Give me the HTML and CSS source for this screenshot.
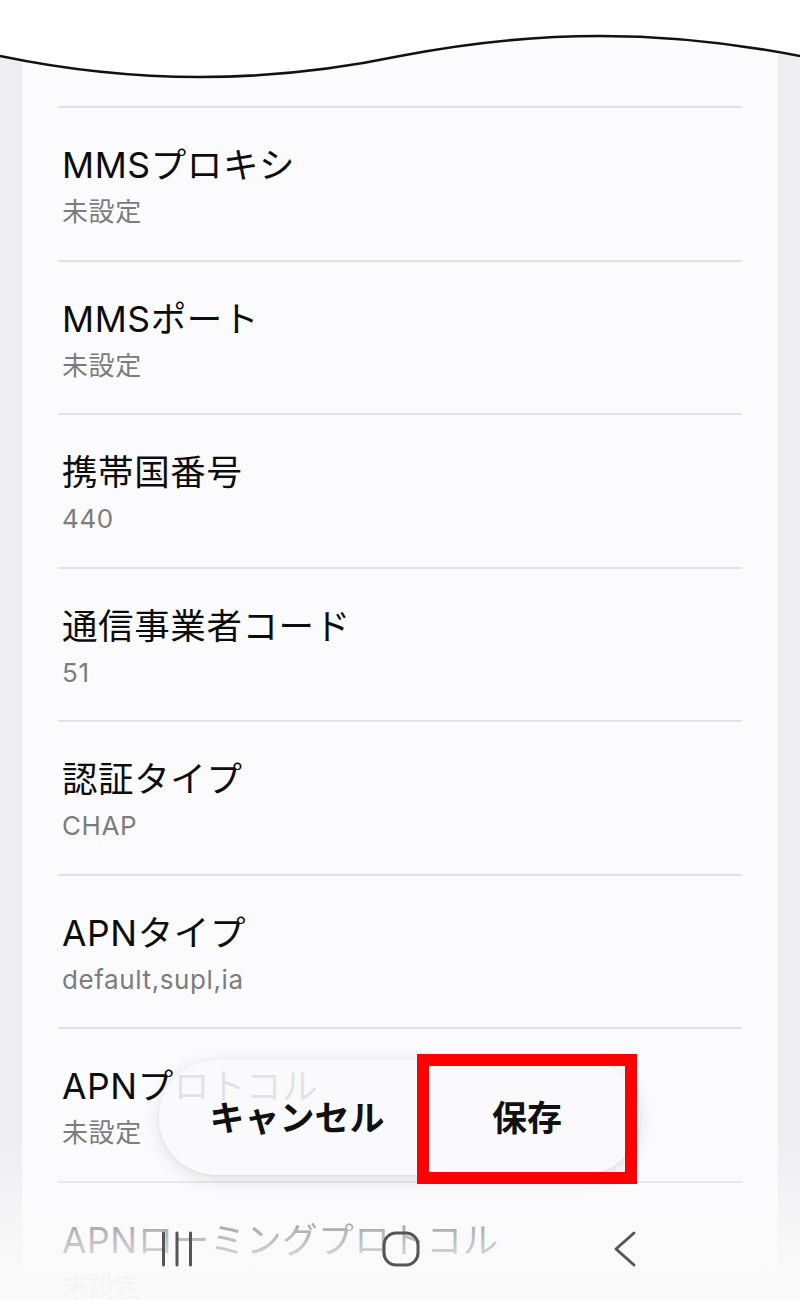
FILE: index.html
```html
<!DOCTYPE html>
<html lang="ja">
<head>
<meta charset="utf-8">
<title>APN編集</title>
<link rel="stylesheet" href="styles.css">
</head>
<body>
<div class="screen">
  <div class="card">
    <ul class="list">
      <li class="row"><div class="title">MMSプロキシ</div><div class="value">未設定</div></li>
      <li class="row"><div class="title">MMSポート</div><div class="value">未設定</div></li>
      <li class="row"><div class="title">携帯国番号</div><div class="value">440</div></li>
      <li class="row"><div class="title">通信事業者コード</div><div class="value">51</div></li>
      <li class="row"><div class="title">認証タイプ</div><div class="value">CHAP</div></li>
      <li class="row"><div class="title">APNタイプ</div><div class="value">default,supl,ia</div></li>
      <li class="row"><div class="title">APNプロトコル</div><div class="value">未設定</div></li>
      <li class="row"><div class="title">APNローミングプロトコル</div><div class="value">未設定</div></li>
    </ul>
  </div>

  <svg class="tear" width="800" height="90" viewBox="0 0 800 90">
    <path d="M0 0 H800 V56 C733 43 667 36 600 36 C533 36 467 43 400 56 C333 70 267 77 200 77 C133 77 67 70 0 56 Z" fill="#ffffff"/>
    <path d="M0 56 C67 70 133 77 200 77 C267 77 333 70 400 56 C467 43 533 36 600 36 C667 36 733 43 800 56" fill="none" stroke="#111" stroke-width="2.6"/>
  </svg>

  <div class="navfade"></div>

  <div class="actions">
    <button class="btn cancel">キャンセル</button>
    <button class="btn save">保存</button>
    <div class="highlight"></div>
  </div>

  <nav class="navbar">
    <svg class="nav-icon recents" width="34" height="36" viewBox="0 0 34 36">
      <path d="M3.5 2 V34 M17 2 V34 M30.5 2 V34" stroke="#555" stroke-width="3" stroke-linecap="round" fill="none"/>
    </svg>
    <svg class="nav-icon home" width="38" height="36" viewBox="0 0 38 36">
      <rect x="2" y="2" width="34" height="32" rx="12" ry="12" stroke="#555" stroke-width="3" fill="none"/>
    </svg>
    <svg class="nav-icon back" width="28" height="38" viewBox="0 0 28 38">
      <path d="M23 3 L5 19 L23 35" stroke="#555" stroke-width="3" stroke-linecap="round" stroke-linejoin="round" fill="none"/>
    </svg>
  </nav>
</div>
</body>
</html>
```

FILE: styles.css
```css
* { box-sizing: border-box; }

html, body {
  margin: 0;
  padding: 0;
}

body {
  width: 800px;
  height: 1300px;
  overflow: hidden;
  background: #efeff1;
  font-family: Inter, "Noto Sans CJK JP", sans-serif;
}

.screen {
  position: relative;
  width: 800px;
  height: 1300px;
  overflow: hidden;
}

.card {
  margin: 0 22px;
  background: #fbfbfd;
  height: 1300px;
  padding-top: 106px;
}

.list {
  list-style: none;
  margin: 0;
  padding: 0 36px;
}

.row {
  height: 153.5px;
  border-top: 2px solid #e3e3e6;
  padding: 37px 0 0 4px;
}

.title {
  font-size: 35.5px;
  line-height: 42px;
  letter-spacing: 0.6px;
  color: #0d0d0d;
  white-space: nowrap;
}

.value {
  margin-top: 9px;
  font-size: 26px;
  line-height: 32px;
  letter-spacing: 0.6px;
  color: #7c7c7e;
  white-space: nowrap;
}

.tear {
  position: absolute;
  top: 0;
  left: 0;
  display: block;
}

.navfade {
  position: absolute;
  left: 0;
  bottom: 0;
  width: 800px;
  height: 160px;
  background: linear-gradient(to bottom,
    rgba(250, 250, 251, 0) 0%,
    rgba(250, 250, 251, 0.18) 22%,
    rgba(250, 250, 251, 0.7) 57%,
    rgba(250, 250, 251, 0.95) 84%,
    rgba(250, 250, 251, 0.97) 100%);
}

.actions {
  position: absolute;
  left: 159px;
  top: 1060px;
  width: 481px;
  height: 115px;
  border-radius: 58px;
  background: rgba(250, 250, 252, 0.9);
  box-shadow: 0 4px 18px rgba(0, 0, 0, 0.10), 0 1px 4px rgba(0, 0, 0, 0.05);
  display: flex;
  align-items: center;
  padding-left: 18px;
}

.btn {
  border: 0;
  background: transparent;
  font-family: Inter, "Noto Sans CJK JP", sans-serif;
  font-weight: 700;
  font-size: 35px;
  line-height: 44px;
  color: #111;
  padding: 0;
  height: 115px;
}

.cancel { width: 240px; }
.save { width: 220px; }

.highlight {
  position: absolute;
  left: 258px;
  top: -6px;
  width: 220px;
  height: 130px;
  border: 12px solid #ff0000;
}

.navbar {
  position: absolute;
  left: 0;
  bottom: 0;
  width: 800px;
  height: 100px;
}

.nav-icon {
  position: absolute;
  display: block;
}

.recents { left: 160px; top: 31px; }
.home { left: 382px; top: 31px; }
.back { left: 611px; top: 30px; }
```
